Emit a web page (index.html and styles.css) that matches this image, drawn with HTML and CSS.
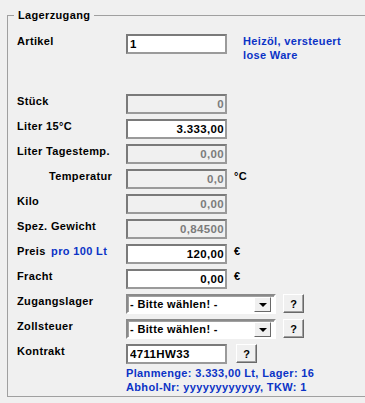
FILE: index.html
```html
<!DOCTYPE html>
<html lang="de">
<head>
    <meta charset="UTF-8">
    <title>Lagerzugang</title>
    <link rel="stylesheet" href="styles.css">
</head>
<body>
    <fieldset class="frame">
        <legend>Lagerzugang</legend>

        <div class="row row-first">
            <label class="lbl">Artikel</label>
            <input class="field" type="text" value="1">
            <div class="note">Heizöl, versteuert<br>lose Ware</div>
        </div>

        <div class="row">
            <label class="lbl">Stück</label>
            <input class="field num ro" type="text" value="0" readonly>
        </div>
        <div class="row">
            <label class="lbl">Liter 15°C</label>
            <input class="field num" type="text" value="3.333,00">
        </div>
        <div class="row">
            <label class="lbl">Liter Tagestemp.</label>
            <input class="field num ro" type="text" value="0,00" readonly>
        </div>
        <div class="row">
            <label class="lbl lbl-indent">Temperatur</label>
            <input class="field num ro" type="text" value="0,0" readonly>
            <span class="unit">°C</span>
        </div>
        <div class="row">
            <label class="lbl">Kilo</label>
            <input class="field num ro" type="text" value="0,00" readonly>
        </div>
        <div class="row">
            <label class="lbl">Spez. Gewicht</label>
            <input class="field num ro" type="text" value="0,84500" readonly>
        </div>
        <div class="row">
            <label class="lbl">Preis <span class="blue">pro 100 Lt</span></label>
            <input class="field num" type="text" value="120,00">
            <span class="unit">€</span>
        </div>
        <div class="row">
            <label class="lbl">Fracht</label>
            <input class="field num" type="text" value="0,00">
            <span class="unit">€</span>
        </div>
        <div class="row">
            <label class="lbl">Zugangslager</label>
            <div class="combo">
                <span class="combo-text">- Bitte wählen! -</span>
                <span class="combo-btn"><span class="arrow"></span></span>
            </div>
            <button class="qbtn qbtn-combo">?</button>
        </div>
        <div class="row">
            <label class="lbl">Zollsteuer</label>
            <div class="combo">
                <span class="combo-text">- Bitte wählen! -</span>
                <span class="combo-btn"><span class="arrow"></span></span>
            </div>
            <button class="qbtn qbtn-combo">?</button>
        </div>
        <div class="row">
            <label class="lbl">Kontrakt</label>
            <input class="field" type="text" value="4711HW33">
            <button class="qbtn qbtn-field">?</button>
        </div>

        <div class="info">
            Planmenge: 3.333,00 Lt, Lager: 16<br>
            Abhol-Nr: yyyyyyyyyyyy, TKW: 1
        </div>
    </fieldset>
</body>
</html>
```

FILE: styles.css
```css
body {
    margin: 0;
    background-color: #f0f0f0;
    font: bold 11px/14px "Liberation Sans", Arial, sans-serif;
    letter-spacing: 0.35px;
    color: #000;
    overflow: hidden;
}
/* frame runs off the right edge, so no right border */
.frame {
    margin: 8px 0 0 7px;
    width: 351px;
    min-width: 0;
    padding: 12px 0 2px 6px;
    border: 1px solid #a0a0a0;
    border-right: none;
}
.frame legend {
    padding: 0 4px;
}
.row {
    display: flex;
    align-items: flex-start;
    height: 20px;
    margin: 0 0 5px 3px;
}
.row-first {
    height: 55px;
}
.lbl {
    width: 109px;
    flex: none;
}
.lbl-indent {
    padding-left: 32px;
    width: 77px;
}
.blue {
    color: #0b33c6;
    margin-left: 2px;
}
.field {
    width: 101px;
    height: 20px;
    box-sizing: border-box;
    flex: none;
    margin: 0;
    padding: 0 1px 0 2px;
    font: inherit;
    font-size: 11.5px;
    letter-spacing: inherit;
    color: #000;
    background: #fff;
    border: 2px solid;
    border-color: #7a7a7a #9a9a9a #9a9a9a #7a7a7a;
    outline: none;
}
.num {
    text-align: right;
}
.ro {
    background: #f0f0f0;
    color: #7c7c7c;
}
.unit {
    margin-left: 7px;
}
.note {
    margin-left: 16px;
    color: #0b33c6;
}
.combo {
    width: 150px;
    height: 20px;
    box-sizing: border-box;
    display: flex;
    align-items: center;
    background: #fff;
    border: 2px solid;
    border-color: #8a8a8a #fff #fff #8a8a8a;
    box-shadow: inset 1px 1px #a0a0a0;
    padding-right: 3px;
}
.combo-text {
    flex: 1;
    padding-left: 2px;
}
.combo-btn {
    width: 17px;
    height: 15px;
    box-sizing: border-box;
    display: flex;
    align-items: center;
    justify-content: center;
    background: #f0f0f0;
    border: 1px solid;
    border-color: #fff #696969 #696969 #fff;
}
.arrow {
    width: 0;
    height: 0;
    border-left: 4px solid transparent;
    border-right: 4px solid transparent;
    border-top: 4px solid #000;
    margin-top: 2px;
}
.qbtn {
    width: 21px;
    height: 20px;
    padding: 0;
    font: inherit;
    background: #f0f0f0;
    border: 1px solid;
    border-color: #fff #696969 #696969 #fff;
    box-shadow: inset -1px -1px #a0a0a0;
}
.qbtn-combo {
    margin-left: 7px;
    height: 19px;
}
.qbtn-field {
    margin-left: 9px;
    height: 19px;
}
.info {
    margin: -3px 0 0 112px;
    color: #0b33c6;
}
```
